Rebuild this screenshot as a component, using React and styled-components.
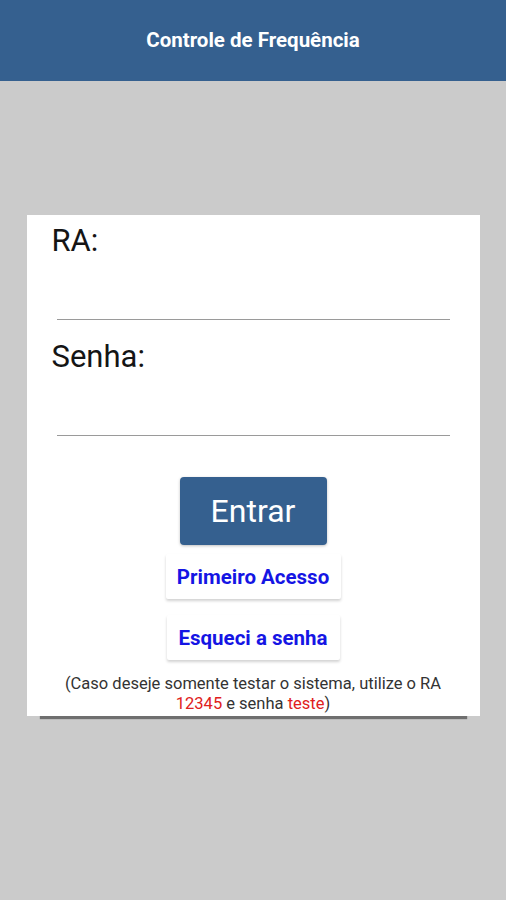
import React from "react";
import styled, { createGlobalStyle } from "styled-components";

const GlobalStyle = createGlobalStyle`
  html, body {
    margin: 0;
    padding: 0;
    background: #cbcbcb;
    font-family: Roboto, "Liberation Sans", sans-serif;
  }
`;

const Page = styled.div`
  width: 506px;
  min-height: 900px;
  background: #cbcbcb;
`;

const Header = styled.header`
  height: 81px;
  background: #35608f;
  display: flex;
  align-items: center;
  justify-content: center;
  color: #fff;
  font-weight: 700;
  font-size: 20.5px;
  padding-bottom: 1px;
  box-sizing: border-box;
`;

const Body = styled.main`
  display: flex;
  justify-content: center;
  padding-top: 134px;
`;

const Card = styled.section`
  width: 453px;
  background: #fff;
  display: flex;
  flex-direction: column;
  padding: 8px 0 0;
  box-sizing: border-box;
  height: 501px;
  box-shadow: 0 16px 1px -13px #6f6f6f;
`;

const Label = styled.label`
  font-size: 31px;
  line-height: 35px;
  color: #151515;
  padding-left: 25px;
`;

const Field = styled.input`
  margin: 0 30px 19px;
  height: 59px;
  border: none;
  border-bottom: 1px solid #9a9a9a;
  outline: none;
  background: transparent;
  font-size: 22px;
  font-family: inherit;
`;

const Actions = styled.div`
  display: flex;
  flex-direction: column;
  align-items: center;
  margin-top: 22px;
`;

const PrimaryButton = styled.button`
  width: 147px;
  height: 68px;
  background: #35608f;
  color: #fff;
  border: none;
  border-radius: 4px;
  font-family: inherit;
  font-size: 32px;
  box-shadow: 0 1px 3px rgba(0, 0, 0, 0.25);
`;

const LinkButton = styled.button`
  width: ${(p) => p.$w}px;
  height: 45px;
  margin-top: ${(p) => p.$top}px;
  background: #fff;
  border: none;
  border-radius: 2px;
  color: #1515e4;
  font-family: inherit;
  font-weight: 700;
  font-size: 20.5px;
  padding: 0;
  box-shadow: 0 2px 3px rgba(0, 0, 0, 0.18);
`;

const Note = styled.p`
  margin: 14px 0 0;
  text-align: center;
  font-size: 16.5px;
  line-height: 20px;
  color: #333;
`;

const Red = styled.span`
  color: #e02020;
`;

export default function App() {
  return (
    <Page>
      <GlobalStyle />
      <Header>Controle de Frequência</Header>
      <Body>
        <Card>
          <Label>RA:</Label>
          <Field type="text" />
          <Label>Senha:</Label>
          <Field type="password" />
          <Actions>
            <PrimaryButton>Entrar</PrimaryButton>
            <LinkButton $w={175} $top={9}>Primeiro Acesso</LinkButton>
            <LinkButton $w={173} $top={16}>Esqueci a senha</LinkButton>
          </Actions>
          <Note>
            (Caso deseje somente testar o sistema, utilize o RA
            <br />
            <Red>12345</Red> e senha <Red>teste</Red>)
          </Note>
        </Card>
      </Body>
    </Page>
  );
}
